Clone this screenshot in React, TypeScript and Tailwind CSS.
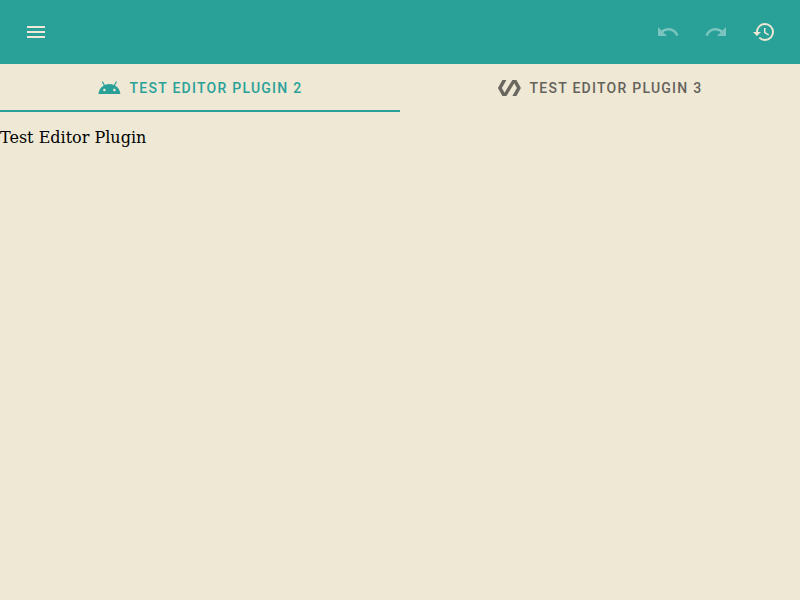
import { MdMenu, MdUndo, MdRedo, MdHistory } from "react-icons/md";

function Polymer() {
  return (
    <svg viewBox="0.6 0 24 24" className="h-6 w-6 overflow-visible" fill="currentColor">
      <path d="M19 4h-4L7.11 16.63 4.5 12 9 4H5L.5 12 5 20h4l7.89-12.63L19.5 12 15 20h4l4.5-8z" />
    </svg>
  );
}

function Android() {
  return (
    <svg viewBox="0.6 0 24 24" className="h-6 w-6 overflow-visible" fill="currentColor">
      <path d="M17.6 9.48l1.84-3.18c.16-.31.04-.69-.26-.85-.29-.15-.65-.06-.83.22l-1.88 3.24c-2.86-1.21-6.08-1.21-8.94 0L5.65 5.67c-.19-.29-.58-.38-.87-.2-.28.18-.37.54-.22.83L6.4 9.48C3.3 11.25 1.28 14.44 1 18h22c-.28-3.56-2.3-6.75-5.4-8.52zM7 15.25c-.69 0-1.25-.56-1.25-1.25S6.31 12.75 7 12.75s1.25.56 1.25 1.25S7.69 15.25 7 15.25zm10 0c-.69 0-1.25-.56-1.25-1.25s.56-1.25 1.25-1.25 1.25.56 1.25 1.25-.56 1.25-1.25 1.25z" />
    </svg>
  );
}

export default function App() {
  return (
    <div className="flex h-screen flex-col bg-[#eee8d5]">
      <header className="flex h-16 items-center justify-between bg-[#2aa198] px-3 text-[#eee8d5]">
        <button className="p-3" aria-label="Menu"><MdMenu size={24} /></button>
        <div className="flex">
          <button className="p-3 text-white/38" aria-label="Undo"><MdUndo size={24} /></button>
          <button className="p-3 text-white/38" aria-label="Redo"><MdRedo size={24} /></button>
          <button className="p-3" aria-label="History"><MdHistory size={24} /></button>
        </div>
      </header>
      <nav className="grid h-12 grid-cols-2 font-[Roboto,sans-serif] text-sm font-medium tracking-[1.25px]">
        <button className="flex items-center justify-center gap-2 border-b-2 border-[#2aa198] pt-0.5 text-[#2aa198]">
          <Android />
          <span>TEST EDITOR PLUGIN 2</span>
        </button>
        <button className="flex items-center justify-center gap-2 text-[#696760]">
          <Polymer />
          <span className="text-[#65625b]">TEST EDITOR PLUGIN 3</span>
        </button>
      </nav>
      <main className="pt-4 font-['DejaVu_Serif',serif] text-base leading-[19px] text-black">Test Editor Plugin</main>
    </div>
  );
}
